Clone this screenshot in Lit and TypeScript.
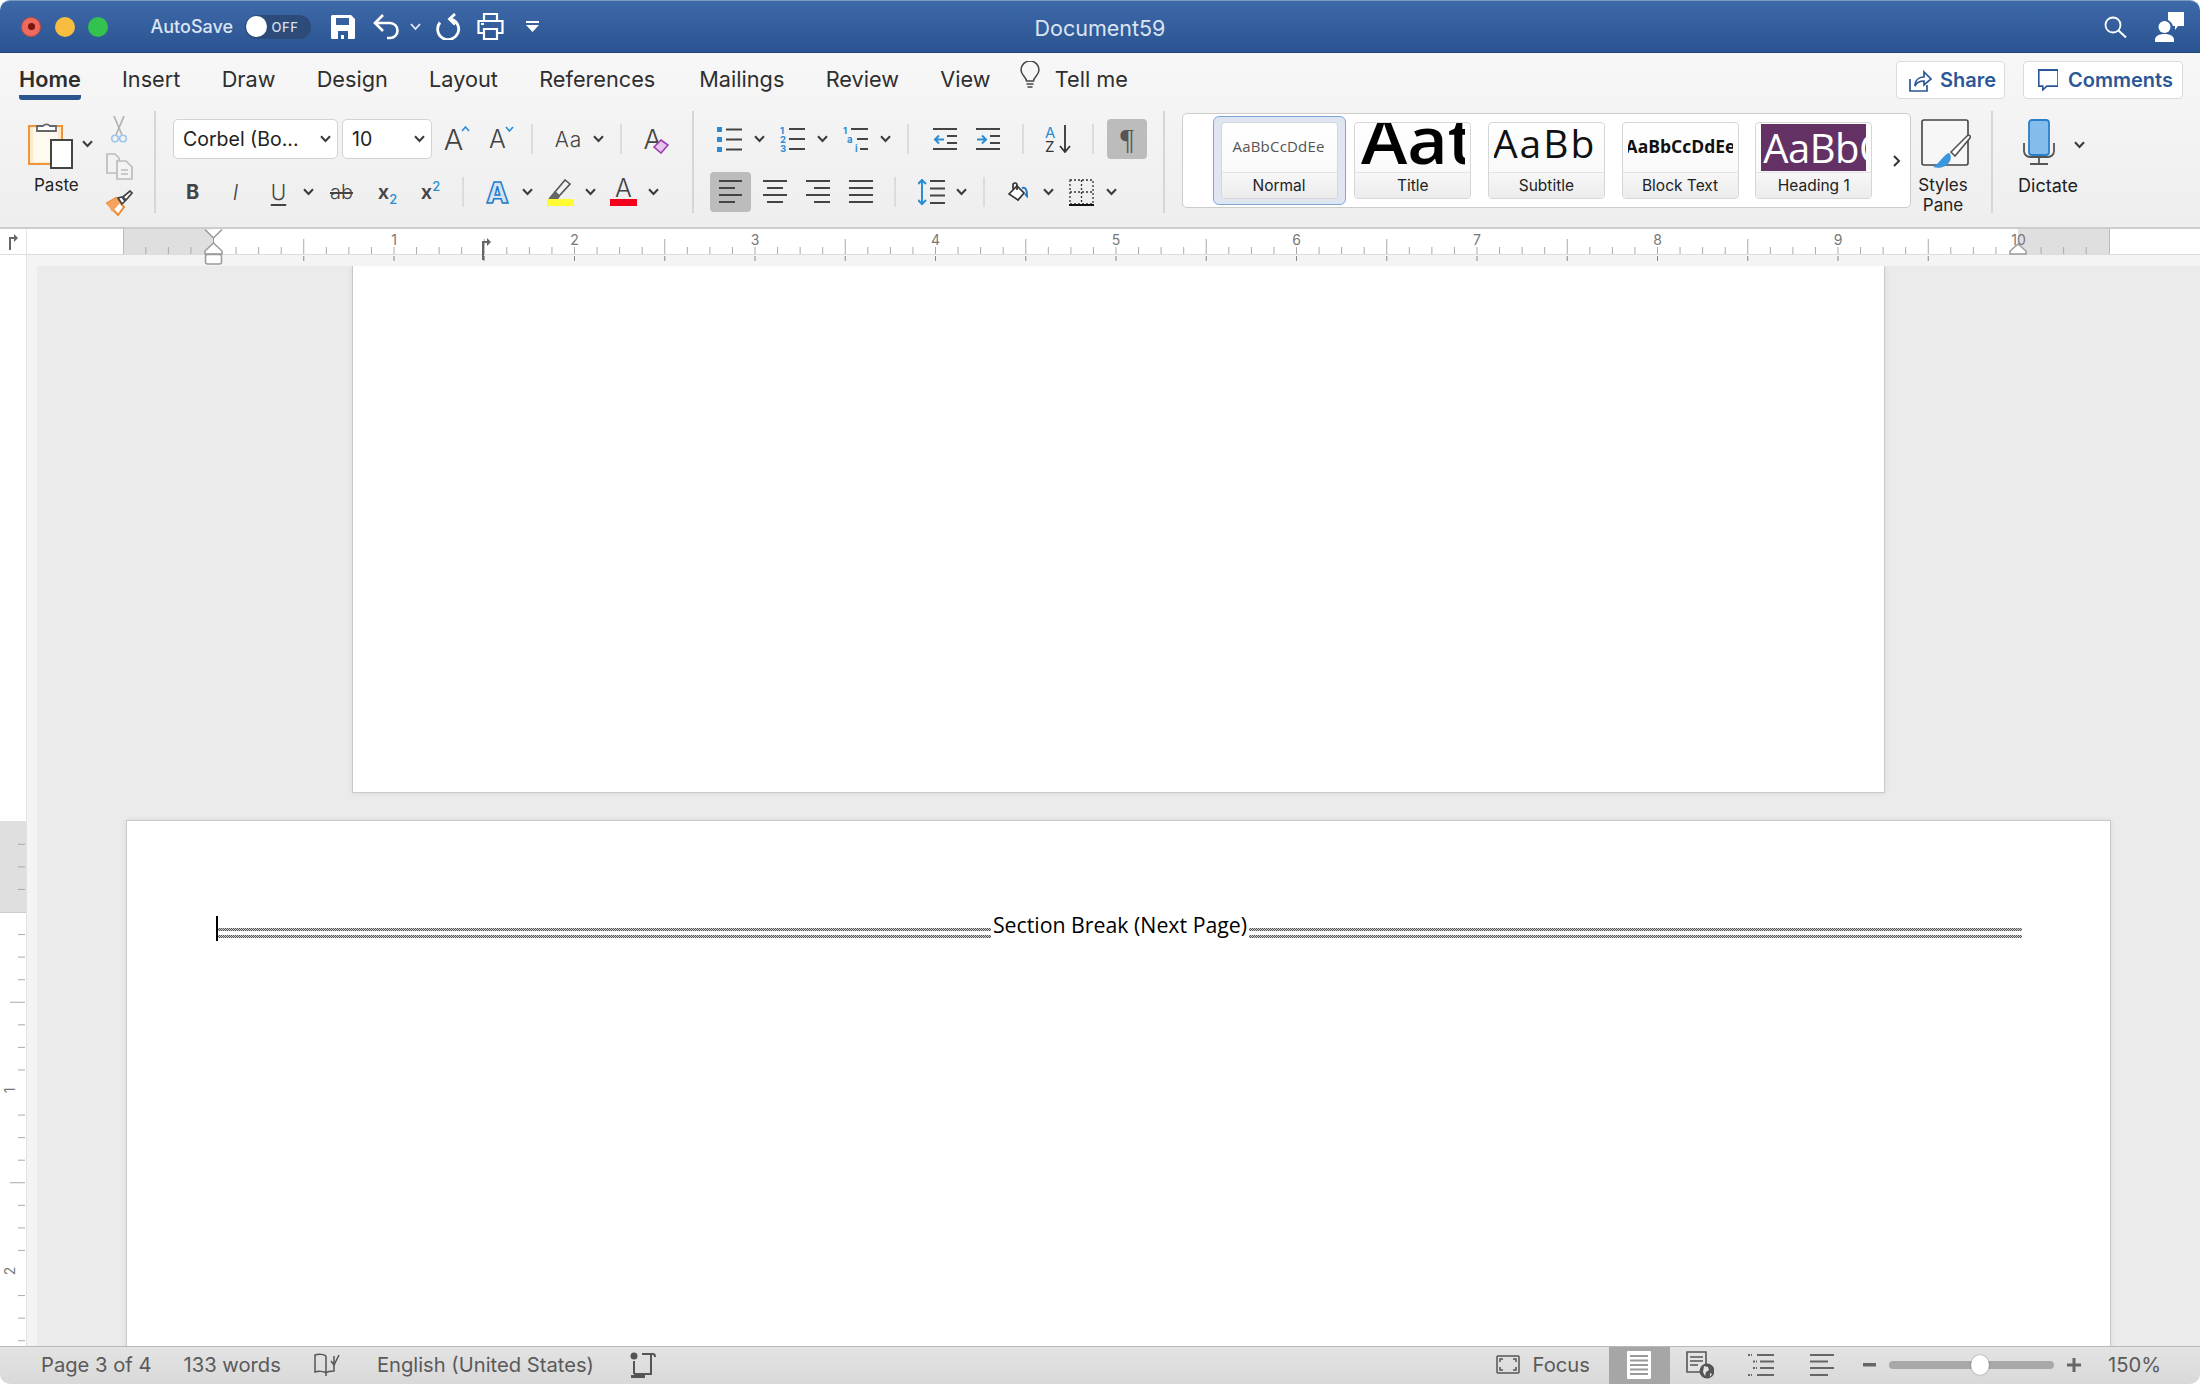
import { LitElement, html, svg, css } from "lit";
import { customElement } from "lit/decorators.js";

const chev = html`<span class="chev"><svg width="11" height="8" viewBox="0 0 11 8"><path d="M1 1.2l4.5 4.8L10 1.2" fill="none" stroke="#3a3a3a" stroke-width="2"/></svg></span>`;

function lines(rows: number[][]) {
  return rows.map((r) => svg`<path d="M${r[0]} ${r[1]}H${r[2]}" stroke="#444" stroke-width="2"/>`);
}

const alignIcon = (rows: number[][]) => html`<svg width="24" height="24" viewBox="0 0 24 24">${lines(rows)}</svg>`;

// ruler marks, zero is the left page margin, 8 ticks to the inch
const INCH = 180.5;
const ZERO = 213.5;

function hRuler() {
  const marks = [];
  for (let i = -3; i <= 83; i++) {
    const x = ZERO + (i * INCH) / 8;
    if (i % 8 === 0) {
      if (i > 0 && i < 80) marks.push(svg`<path d="M${x} 18V25" stroke="#aaa"/><path d="M${x} 27V32" stroke="#888"/>`);
      if (i > 0) marks.push(svg`<text x=${x} y="16" text-anchor="middle" class="rn">${i / 8}</text>`);
    } else if (i % 4 === 0) {
      marks.push(svg`<path d="M${x} 10V25" stroke="#aaa"/><path d="M${x} 27V32" stroke="#888"/>`);
    } else {
      marks.push(svg`<path d="M${x} 18V25" stroke="#aaa"/>`);
    }
  }
  return svg`
    <rect x="0" y="0" width="2200" height="37" fill="#fff"/>
    <rect x="26" y="26" width="2174" height="11" fill="#f4f4f4"/>
    <rect x="123" y="0" width="90" height="25" fill="#dfdfdf"/>
    <rect x="2018" y="0" width="91" height="25" fill="#dfdfdf"/>
    <path d="M123.5 0V25M2109.5 0V25" stroke="#bbb"/>
    <path d="M0 25.5H2200" stroke="#ddd"/>
    <path d="M26.5 0V37" stroke="#e2e2e2"/>
    ${marks}
    <path d="M10 21V9h5" fill="none" stroke="#666" stroke-width="2"/><path d="M14 5l4 4-4 4z" fill="#666"/>
    <path d="M483 31V13h5" fill="none" stroke="#666" stroke-width="2"/><path d="M487 9l4 4-4 4z" fill="#666"/>
    <path d="M213.5 9V14" stroke="#999"/>
    <path d="M205 0.5L213.5 9 222 0.5" fill="#fff" stroke="#999" stroke-width="1.5"/>
    <path d="M213.5 14L222 22V25H205V22z" fill="#fff" stroke="#999" stroke-width="1.5"/>
    <rect x="205.5" y="25.5" width="16" height="9.5" rx="2" fill="#fff" stroke="#999" stroke-width="1.5"/>
    <path d="M2018 15L2026 22V25H2010V22z" fill="#fff" stroke="#999" stroke-width="1.5"/>
  `;
}

function vRuler() {
  // y is relative to the top of the main row (266 in the window), inch zero sits at 912
  const zero = 912 - 266;
  const marks = [];
  for (let i = -3; i < 30; i++) {
    const y = zero + (i * INCH) / 8;
    if (i % 8 === 0 && i > 0) {
      marks.push(svg`<text transform="translate(15 ${y - 2}) rotate(-90)" text-anchor="middle" class="rn">${i / 8}</text>`);
    } else if (i % 4 === 0 && i !== 0) {
      marks.push(svg`<path d="M10 ${y}H25" stroke="#aaa"/>`);
    } else if (i !== 0) {
      marks.push(svg`<path d="M18 ${y}H25" stroke="#aaa"/>`);
    }
  }
  return svg`
    <rect x="0" y="555" width="26" height="91" fill="#dfdfdf"/>
    <path d="M0 646.5H26" stroke="#ccc"/>
    ${marks}
  `;
}

@customElement("style-tile")
class StyleTile extends LitElement {
  static properties = { label: { type: String }, selected: { type: Boolean } };
  label = "";
  selected = false;
  static styles = css`
    :host { display: block; width: 117px; position: relative; flex: none; }
    .tile { height: 77px; box-sizing: border-box; border: 1px solid #d6d6d6; border-radius: 4px; background: linear-gradient(#fff, #f6f6f6); overflow: hidden; position: relative; display: flex; flex-direction: column; }
    .sel { position: absolute; inset: -6px -8px; border: 1.5px solid #7fa5d5; border-radius: 6px; background: #dfe6f1; }
    .pv { height: 51px; margin: 0 5px; overflow: hidden; display: flex; align-items: center; justify-content: flex-start; white-space: nowrap; }
    .lb { height: 25px; border-top: 1px solid #e4e4e4; background: linear-gradient(#f7f7f7, #ececec); font-size: 15.5px; line-height: 25px; text-align: center; color: #222; }
  `;
  render() {
    return html`${this.selected ? html`<div class="sel"></div>` : ""}
      <div class="tile"><div class="pv"><slot></slot></div><div class="lb">${this.label}</div></div>`;
  }
}

@customElement("app-root")
export class AppRoot extends LitElement {
  static styles = css`
    :host { display: flex; flex-direction: column; width: 2200px; height: 1384px; overflow: hidden; background: #fff; font-family: Inter, "Liberation Sans", sans-serif; color: #333; }
    svg { display: block; flex: none; }
    .rn { font: 14px Inter, sans-serif; fill: #777; }

    /* title bar */
    .title { height: 53px; box-sizing: border-box; flex: none; display: grid; grid-template-columns: 1fr auto 1fr; align-items: center; border-radius: 10px 10px 0 0; border-top: 1px solid #7f9ac2; border-bottom: 1px solid #234575; background: linear-gradient(#3e69a8, #2a5391); color: #fff; }
    .tl { display: flex; align-items: center; padding-left: 21px; }
    .light { width: 20px; height: 20px; border-radius: 50%; margin-right: 13.5px; display: flex; align-items: center; justify-content: center; box-sizing: border-box; }
    .red { background: #ec6a5e; border: 1px solid #c9473c; }
    .red i { width: 7px; height: 7px; border-radius: 50%; background: #7e120c; }
    .yel { background: #f6bd3f; }
    .grn { background: #33c24d; }
    .as { margin-left: 29px; font-size: 18px; font-weight: 500; color: #dbe4f1; width: 94px; }
    .tog { width: 66px; height: 24px; border-radius: 12px; background: #2c4b78; display: flex; align-items: center; gap: 5px; padding-left: 1px; box-sizing: border-box; font-size: 13px; font-weight: 500; letter-spacing: .5px; color: #d5deea; }
    .tog i { width: 21px; height: 21px; border-radius: 50%; background: #fff; }
    .ttxt { font-size: 21.5px; color: #dbe4f1; padding-top: 2px; }
    .tr { display: flex; justify-content: flex-end; align-items: center; gap: 28px; padding-right: 16px; }
    .qa { display: flex; align-items: center; margin-left: 20px; }

    /* tabs */
    .ribbon { flex: none; height: 176px; box-sizing: border-box; border-bottom: 2px solid #cdcdcd; background: linear-gradient(#f7f7f7, #eeeeee); display: flex; flex-direction: column; }
    .tabs { height: 58px; flex: none; display: flex; align-items: flex-start; padding-left: 19px; font-size: 21.7px; color: #2e2e2e; }
    .tab { padding-top: 13px; margin-right: 41.3px; height: 47px; box-sizing: border-box; }
    .tab.cur { font-weight: 600; border-bottom: 5px solid #2b5591; border-radius: 0 0 3px 3px; }
    .tab.wide { margin-right: 44px; }
    .bulb { margin: 8px 15px 0 -12px; }
    .acts { margin-left: auto; display: flex; gap: 18px; padding: 8px 17px 0 0; }
    .act { height: 38px; box-sizing: border-box; border: 1px solid #dadada; border-radius: 4px; background: #fff; color: #2b5797; font-size: 20px; font-weight: 600; display: flex; align-items: center; gap: 8px; }
    .share { padding-left: 12px; width: 109px; }
    .cmts { width: 160px; padding-left: 14px; }

    /* ribbon groups */
    .groups { display: flex; height: 102px; flex: none; }
    .grp { box-sizing: border-box; height: 102px; border-right: 2px solid #d6d6d6; padding-top: 8px; flex: none; }
    .clip { width: 156px; display: flex; padding-left: 28px; }
    .paste { width: 77px; display: flex; flex-direction: column; }
    .pasteTop { display: flex; align-items: center; gap: 5px; height: 50px; }
    .plabel { font-size: 17px; color: #222; margin: 6px 0 0 6px; }
    .clipcol { display: flex; flex-direction: column; align-items: center; width: 28px; margin-top: -3px; gap: 10px; }
    .font { width: 538px; padding-left: 15px; }
    .para { width: 471px; padding-left: 14px; }
    .row { height: 40px; display: flex; align-items: center; color: #444; }
    .row + .row { margin-top: 13px; }
    .b { width: 43px; height: 40px; display: flex; align-items: center; justify-content: center; flex: none; position: relative; }
    .chev { width: 17px; margin-right: 3px; display: flex; justify-content: center; flex: none; }
    .sep { width: 2px; height: 30px; background: #dcdcdc; margin: 0 10px; flex: none; }
    .on { background: #bcbcbc; border-radius: 4px; }
    .pil { width: 40px; margin-left: 1px; font: 30px "Liberation Serif", serif; color: #555; }
    .sel { height: 40px; box-sizing: border-box; border: 1px solid #d3d3d3; border-radius: 5px; background: #fff; display: flex; align-items: center; justify-content: space-between; font-size: 19.5px; color: #222; padding-left: 9px; margin-left: 2px; }
    .fam { width: 165px; }
    .siz { width: 90px; margin: 0 0 0 4px; }
    .a1 { font-size: 29px; font-weight: 300; }
    .a2 { font-size: 25px; font-weight: 300; margin-left: 1px; }
    .aa { font-size: 21px; font-weight: 300; letter-spacing: 1px; }
    .up { position: absolute; top: 7px; right: 5px; }
    .bold { font-weight: 700; font-size: 20px; }
    .it { font-style: italic; font-weight: 300; font-size: 21px; }
    .un { text-decoration: underline; text-underline-offset: 4px; font-weight: 300; font-size: 21px; }
    .st { text-decoration: line-through; font-weight: 300; font-size: 20px; }
    .xx { font-weight: 600; font-size: 20px; }
    .xx sub, .xx sup { color: #2a8dd4; font-size: 13px; font-weight: 500; line-height: 0; }
    .fx { font-size: 29px; font-weight: 800; color: #cfe4f7; -webkit-text-stroke: 1.5px #1f7ac9; }
    .col { display: flex; flex-direction: column; align-items: center; }
    .fc { font-size: 25px; font-weight: 300; line-height: 21px; }
    .bar { width: 27px; height: 7px; }

    /* styles */
    .stylesG { width: 828px; display: flex; padding: 2px 0 0 17px; }
    .gal { width: 729px; height: 95px; box-sizing: border-box; border: 1px solid #ccc; border-radius: 5px; background: #fff; display: flex; align-items: center; gap: 16.7px; padding-left: 37.5px; overflow: hidden; flex: none; }
    .more { margin-left: 4px; }
    .pane { width: 80px; margin-left: -8px; display: flex; flex-direction: column; align-items: center; text-align: center; padding-top: 6px; font-size: 17px; color: #222; line-height: 20px; }
    .pane svg { margin: 0 0 6px 6px; }
    .dict { display: flex; padding: 8px 0 0 32px; font-size: 18px; color: #222; }
    .dictCol { display: flex; flex-direction: column; align-items: center; width: 46px; }
    .dictCol svg { margin: 0 18px 10px 0; }
    .dict .chev { margin: 22px 0 0 0; height: 8px; }

    .pN { font: 15px "Open Sans", sans-serif; color: #555; letter-spacing: .2px; margin: 0 0 4px 6px; }
    .pT { display: block; font: 600 66px/62px "Open Sans", sans-serif; color: #000; margin: -16px 0 0 1px; align-self: flex-start; transform: scaleX(1.06); transform-origin: left; }
    .pS { font: 39px "Open Sans", sans-serif; color: #111; letter-spacing: 2px; margin: 0 0 10px -1px; }
    .pB { font: 700 17.5px "Open Sans", sans-serif; color: #111; margin: 0 0 3px -2px; }
    .pH { display: block; font: 40px/47px "Open Sans", sans-serif; color: #fff; background: #643164; width: 107px; height: 47px; letter-spacing: -.5px; overflow: hidden; padding-left: 2px; box-sizing: border-box; flex: none; }

    /* document */
    .ruler { flex: none; }
    .main { flex: 1; min-height: 0; display: flex; }
    .vr { width: 26px; flex: none; background: #fff; border-right: 1px solid #e2e2e2; }
    .strip { width: 10px; flex: none; background: #f4f4f4; }
    .doc { flex: 1; background: #ebebeb; overflow: hidden; }
    .page { background: #fff; border: 1px solid #c9c9c9; box-sizing: border-box; box-shadow: 0 0 6px rgba(0, 0, 0, .08); }
    .p1 { width: 1533px; height: 527px; margin-left: 315px; border-top: 0; }
    .p2 { width: 1985px; height: 700px; margin: 27px 0 0 89px; padding: 85px 88px 0 89px; }
    .sec { display: flex; align-items: center; height: 38px; }
    .caret { width: 2px; height: 25px; background: #000; flex: none; margin-top: 6px; }
    .brk { flex: 1; display: flex; flex-direction: column; gap: 4px; margin-top: 16px; }
    .brk::before, .brk::after { content: ""; height: 3px; background: repeating-conic-gradient(#555 0 25%, #ccc 0 50%) 0 0 / 2px 2px; }
    .stxt { font: 21.3px "Open Sans", sans-serif; color: #000; margin: -2px 2px 0; }

    /* status */
    .status { height: 38px; flex: none; box-sizing: border-box; border-top: 1px solid #b8b8b8; border-radius: 0 0 10px 10px; background: linear-gradient(#e3e3e3, #d9d9d9); display: flex; align-items: center; padding: 0 0 2px 41px; font-size: 20.2px; color: #5a5a5a; }
    .sright { margin: 0 0 -2px auto; display: flex; align-items: center; height: 37px; padding-bottom: 2px; box-sizing: border-box; }
    .view { height: 37px; margin-bottom: -2px; width: 61px; padding-bottom: 2px; box-sizing: border-box; display: flex; align-items: center; justify-content: center; flex: none; }
    .view.cur { background: #a6a6a6; }
    .slider { width: 165px; height: 8px; border-radius: 4px; background: #a8a8a8; position: relative; margin: 0 13px; }
    .slider i { position: absolute; left: 82px; top: -6px; width: 18px; height: 20px; border-radius: 50%; background: #fff; box-shadow: 0 0 2px rgba(0, 0, 0, .4); }
  `;

  render() {
    return html`
      <div class="title">
        <div class="tl">
          <span class="light red"><i></i></span><span class="light yel"></span><span class="light grn"></span>
          <span class="as">AutoSave</span>
          <span class="tog"><i></i>OFF</span>
          <div class="qa">
            <svg width="24" height="24" viewBox="0 0 24 24"><path fill-rule="evenodd" fill="#fff" d="M1.5 0H20l4 4v18.500a1.500 1.500 0 0 1-1.500 1.500h-21A1.500 1.500 0 0 1 0 22.500V1.500A1.500 1.500 0 0 1 1.500 0zM5 3v7h13V3zM7 24h10v-8H7zM10 24v-4h3v4z"/></svg>
            <svg style="margin-left:18px" width="27" height="26" viewBox="0 0 27 26"><path d="M10 1L2 9l8 8M2 9h15a7.500 7.500 0 0 1 0 15h-3" fill="none" stroke="#fff" stroke-width="2.600"/></svg>
            <svg style="margin-left:10px" width="11" height="8" viewBox="0 0 11 8"><path d="M1 1l4.500 5L10 1" fill="none" stroke="#e8eef6" stroke-width="1.800"/></svg>
            <svg style="margin-left:14px" width="26" height="27" viewBox="0 0 26 27"><path d="M5 9.500a10.500 10.500 0 1 0 11-3.500" fill="none" stroke="#fff" stroke-width="2.800"/><path d="M20 1l-5.500 5 5.500 5.500" fill="none" stroke="#fff" stroke-width="2.800"/></svg>
            <svg style="margin-left:16px" width="27" height="27" viewBox="0 0 27 27"><path d="M7 8V1h13v7M7 20H1.500V8h24v12H20M7 16h13v10H7z" fill="none" stroke="#fff" stroke-width="2.200"/><path d="M4 11h3" stroke="#fff" stroke-width="2"/></svg>
            <svg style="margin-left:22px" width="13" height="11" viewBox="0 0 13 11"><path d="M0 0h13v2H0z" fill="#fff"/><path d="M0 4h13l-6.500 7z" fill="#fff"/></svg>
          </div>
        </div>
        <div class="ttxt">Document59</div>
        <div class="tr">
          <svg width="23" height="22" viewBox="0 0 23 22"><circle cx="9" cy="9" r="7.500" fill="none" stroke="#fff" stroke-width="1.800"/><path d="M14.500 14.500L22 21.500" stroke="#fff" stroke-width="2"/></svg>
          <svg width="29" height="31" viewBox="0 0 29 31"><circle cx="9.500" cy="16" r="6" fill="#fff"/><path d="M0 31v-2c0-4 4-6 9.500-6s9.500 2 9.500 6v2z" fill="#fff"/><path d="M13 1h16v14h-6l-3 4v-4h-2c-1-3-3-5-5-6z" fill="#fff"/></svg>
        </div>
      </div>

      <div class="ribbon">
        <div class="tabs">
          <span class="tab cur">Home</span>
          <span class="tab">Insert</span><span class="tab">Draw</span><span class="tab">Design</span><span class="tab">Layout</span><span class="tab wide">References</span><span class="tab">Mailings</span><span class="tab">Review</span><span class="tab">View</span>
          <svg class="bulb" width="20" height="28" viewBox="0 0 20 28"><path d="M6.500 20c0-4-5.500-6-5.500-11a9 9 0 0 1 18 0c0 5-5.500 7-5.500 11z" fill="none" stroke="#444" stroke-width="1.500"/><path d="M6.500 23h7M7.500 26h5" stroke="#444" stroke-width="1.500"/></svg>
          <span class="tab">Tell me</span>
          <div class="acts">
            <div class="act share"><svg width="23" height="23" viewBox="0 0 23 23"><path d="M1 10v12h17v-6M6 17c0-6 4-9 9-9V3l7 7-7 6v-4c-4 0-7 1-9 5z" fill="none" stroke="#2b5797" stroke-width="1.700"/></svg>Share</div>
            <div class="act cmts"><svg width="20" height="22" viewBox="0 0 20 22" style="margin-right:2px"><path d="M1 1h24v17H11l-5 4v-4H1z" transform="scale(.8 .95)" fill="none" stroke="#2b5797" stroke-width="2"/></svg>Comments</div>
          </div>
        </div>

        <div class="groups">
          <div class="grp clip">
            <div class="paste">
              <div class="pasteTop">
                <svg width="46" height="50" viewBox="0 0 46 50">
                  <rect x="1" y="7" width="33" height="38" fill="#fdeccb" stroke="#f0943a" stroke-width="2"/>
                  <rect x="5" y="9" width="25" height="34" fill="#fffaf0"/>
                  <path d="M9 12V7h6a4.500 4.500 0 0 1 7 0h6v5z" fill="#fff" stroke="#666" stroke-width="1.800"/>
                  <rect x="23" y="21" width="21" height="28" fill="#fff" stroke="#444" stroke-width="2"/>
                </svg>
                ${chev}
              </div>
              <span class="plabel">Paste</span>
            </div>
            <div class="clipcol">
              <svg width="16" height="27" viewBox="0 0 16 27"><path d="M3 0l8 19M13 0L5 19" stroke="#b0b0b0" stroke-width="1.600"/><circle cx="4" cy="22.500" r="3.300" fill="none" stroke="#9cc6ea" stroke-width="1.600"/><circle cx="12" cy="22.500" r="3.300" fill="none" stroke="#9cc6ea" stroke-width="1.600"/></svg>
              <svg width="27" height="27" viewBox="0 0 27 27"><path d="M11 20H1V1h8l4 4v3" fill="none" stroke="#bcbcbc" stroke-width="1.700"/><path d="M11 8h9l6 6v12H11z" fill="#f3f3f3" stroke="#bcbcbc" stroke-width="1.700"/><path d="M15 17h7M15 21h7" stroke="#bcbcbc" stroke-width="1.500"/></svg>
              <svg width="27" height="26" viewBox="0 0 27 26"><path d="M1 13l9-5 8 9-6 8z" fill="#fff" stroke="#ee8a34" stroke-width="2"/><path d="M1 13l9-5 4 5-8 9z" fill="#f5a35c"/><path d="M12 8l4 6 3-3-3-4zM17 7l7-6 2 2-6 7z" fill="#fff" stroke="#444" stroke-width="1.700"/></svg>
            </div>
          </div>

          <div class="grp font">
            <div class="row">
              <span class="sel fam">Corbel (Bo...${chev}</span>
              <span class="sel siz">10${chev}</span>
              <span class="b a1">A<svg class="up" width="9" height="6" viewBox="0 0 9 6"><path d="M1 5l3.500-4L8 5" fill="none" stroke="#2a8dd4" stroke-width="1.600"/></svg></span>
              <span class="b a2">A<svg class="up" width="9" height="6" viewBox="0 0 9 6"><path d="M1 1l3.500 4L8 1" fill="none" stroke="#2a8dd4" stroke-width="1.600"/></svg></span>
              <span class="sep" style="margin:0 14px 0 12px"></span>
              <span class="b aa">Aa</span>${chev}
              <span class="sep" style="margin:0 9px 0 10px"></span>
              <span class="b" style="font-size:27px;font-weight:300">A<svg style="position:absolute;left:22px;top:20px" width="16" height="15" viewBox="0 0 16 15"><path d="M1 8l7-7 7 5-7 8z" fill="#e3c6ea" stroke="#a03bb0" stroke-width="1.600"/></svg></span>
            </div>
            <div class="row">
              <span class="b bold">B</span><span class="b it">I</span><span class="b un">U</span>${chev}
              <span class="b st">ab</span>
              <span class="b xx" style="margin-left:3px"><span>x<sub>2</sub></span></span><span class="b xx"><span>x<sup>2</sup></span></span>
              <span class="sep" style="margin:0 12px 0 10px"></span>
              <span class="b fx">A</span>${chev}
              <span class="b col"><svg width="27" height="20" viewBox="0 0 27 20"><path d="M8 13L18 1l5 4-11 12zM8 13l-5 6h8l1-2z" fill="#f3f3f3" stroke="#555" stroke-width="1.600"/><path d="M2 20l6-8 5 5-2 3z" fill="#666"/></svg><span class="bar" style="background:#fffb33"></span></span>${chev}
              <span class="b col"><span class="fc">A</span><span class="bar" style="background:#f4001c"></span></span>${chev}
            </div>
          </div>

          <div class="grp para">
            <div class="row">
              <span class="b"><svg width="25" height="25" viewBox="0 0 25 25"><path d="M0 0h5v5H0zM0 10h5v5H0zM0 20h5v5H0z" fill="#2a8dd4"/>${lines([[9, 2.5, 25], [9, 12.5, 25], [9, 22.5, 25]])}</svg></span>${chev}
              <span class="b"><svg width="25" height="26" viewBox="0 0 25 26"><g font-size="9.500" font-weight="700" fill="#2a8dd4" font-family="Inter"><text x="0" y="8">1</text><text x="0" y="17">2</text><text x="0" y="26">3</text></g>${lines([[9, 3, 25], [9, 13, 25], [9, 23, 25]])}</svg></span>${chev}
              <span class="b"><svg width="25" height="26" viewBox="0 0 25 26"><g font-size="9.500" font-weight="700" fill="#2a8dd4" font-family="Inter"><text x="0" y="8">1</text><text x="4" y="17">a</text><text x="12" y="26">i</text></g>${lines([[8, 3, 25], [14, 13, 25], [17, 23, 25]])}</svg></span>${chev}
              <span class="sep" style="margin:0 14px 0 10px"></span>
              <span class="b"><svg width="24" height="24" viewBox="0 0 24 24">${lines([[0, 2, 24], [14, 9, 24], [14, 16, 24], [0, 22, 24]])}<path d="M11 12.500H2M6 8.500l-4 4 4 4" fill="none" stroke="#2a8dd4" stroke-width="2"/></svg></span>
              <span class="b"><svg width="24" height="24" viewBox="0 0 24 24">${lines([[0, 2, 24], [14, 9, 24], [14, 16, 24], [0, 22, 24]])}<path d="M1 12.500h9M6 8.500l4 4-4 4" fill="none" stroke="#2a8dd4" stroke-width="2"/></svg></span>
              <span class="sep" style="margin:0 13px 0 13px"></span>
              <span class="b"><svg width="28" height="28" viewBox="0 0 28 28"><text x="0" y="12.500" font-size="15" font-family="Inter" fill="#2a8dd4">A</text><text x="0" y="27" font-size="15" font-family="Inter" fill="#333">Z</text><path d="M20 0v26M15 21l5 6 5-6" fill="none" stroke="#333" stroke-width="1.800"/></svg></span>
              <span class="sep" style="margin:0 12px 0 12px"></span>
              <span class="b on pil">¶</span>
            </div>
            <div class="row" style="padding-left:2px">
              <span class="b on" style="width:41px;margin:0 2px 0 0">${alignIcon([[0, 1, 23], [0, 8, 16], [0, 15, 23], [0, 22, 16]])}</span>
              <span class="b">${alignIcon([[0, 1, 24], [4, 8, 20], [0, 15, 24], [4, 22, 20]])}</span>
              <span class="b">${alignIcon([[0, 1, 24], [8, 8, 24], [0, 15, 24], [8, 22, 24]])}</span>
              <span class="b">${alignIcon([[0, 1, 24], [0, 8, 24], [0, 15, 24], [0, 22, 24]])}</span>
              <span class="sep" style="margin:0 14px 0 12px"></span>
              <span class="b"><svg width="27" height="26" viewBox="0 0 27 26"><path d="M4 0v26M0 5l4-4 4 4M0 21l4 4 4-4" fill="none" stroke="#2a8dd4" stroke-width="2"/>${lines([[12, 2, 27], [12, 9.500, 27], [12, 16.500, 27], [12, 24, 27]])}</svg></span>${chev}
              <span class="sep" style="margin:0 12px 0 10px"></span>
              <span class="b"><svg width="21" height="21" viewBox="0 0 21 21"><path d="M1 12l8-8 7 7-6 7z" fill="#fff" stroke="#333" stroke-width="1.700"/><path d="M5 7V3a2 2 0 0 1 4 0v5" fill="none" stroke="#333" stroke-width="1.700"/><path d="M14 6c4-1 5 2 5 8l-2-2" fill="none" stroke="#1f7ac9" stroke-width="2"/></svg></span>${chev}
              <span class="b"><svg width="25" height="27" viewBox="0 0 25 27"><path d="M1 1h23v24H1zM12.500 1v24M1 13h23" fill="none" stroke="#333" stroke-width="1.300" stroke-dasharray="2 2"/><path d="M0 26h25" stroke="#111" stroke-width="2"/></svg></span>${chev}
            </div>
          </div>

          <div class="grp stylesG">
            <div class="gal">
              <style-tile label="Normal" selected><span class="pN">AaBbCcDdEe</span></style-tile>
              <style-tile label="Title"><span class="pT">Aat</span></style-tile>
              <style-tile label="Subtitle"><span class="pS">AaBb</span></style-tile>
              <style-tile label="Block Text"><span class="pB">AaBbCcDdEe</span></style-tile>
              <style-tile label="Heading 1"><span class="pH">AaBbC</span></style-tile>
              <svg class="more" width="8" height="12" viewBox="0 0 8 12"><path d="M1 1l5 5-5 5" fill="none" stroke="#333" stroke-width="2"/></svg>
            </div>
            <div class="pane">
              <svg width="50" height="50" viewBox="0 0 50 50"><rect x="1" y="1" width="46" height="45" rx="2" fill="#f7f7f7" stroke="#444" stroke-width="1.600"/><path d="M30 33L46 17c2-2 4 0 3 2L34 37z" fill="#fff" stroke="#555" stroke-width="1.600"/><path d="M12 48c7 2 14 0 17-6 2-4 0-8-1-8-4 0-9 10-16 14z" fill="#3b97dd"/></svg>
              <span>Styles<br/>Pane</span>
            </div>
          </div>

          <div class="dict">
            <div class="dictCol">
              <svg width="32" height="46" viewBox="0 0 32 46"><rect x="6" y="1" width="20" height="35" rx="3" fill="#84bdec" stroke="#2a7fc9" stroke-width="1.800"/><path d="M1 24v8a6 6 0 0 0 6 6h18a6 6 0 0 0 6-6v-8M16 38v7M7 45h18" fill="none" stroke="#555" stroke-width="1.800"/></svg>
              <span>Dictate</span>
            </div>
            ${chev}
          </div>
        </div>
      </div>

      <svg class="ruler" width="2200" height="37" viewBox="0 0 2200 37">${hRuler()}</svg>

      <div class="main">
        <svg class="vr" width="26" height="1080" viewBox="0 0 26 1080">${vRuler()}</svg>
        <div class="strip"></div>
        <div class="doc">
          <div class="page p1"></div>
          <div class="page p2">
            <div class="sec">
              <span class="caret"></span><span class="brk"></span>
              <span class="stxt">Section Break (Next Page)</span>
              <span class="brk"></span>
            </div>
          </div>
        </div>
      </div>

      <div class="status">
        <span>Page 3 of 4</span>
        <span style="margin-left:32px">133 words</span>
        <svg style="margin-left:33px" width="26" height="24" viewBox="0 0 26 24"><path d="M12 3C10 1 4 1 1 2v17c3-1 9-1 11 1 2-2 5-2 8-2V3M12 3v20" fill="none" stroke="#555" stroke-width="1.500"/><path d="M17 8l3 4 5-10" fill="none" stroke="#555" stroke-width="1.500"/></svg>
        <span style="margin-left:37px">English (United States)</span>
        <svg style="margin-left:36px" width="26" height="26" viewBox="0 0 26 26"><circle cx="4" cy="4" r="3.500" fill="#555"/><path d="M4 9v13M12 2h11c2 0 2 2 2 3M21 2v20H4" fill="none" stroke="#555" stroke-width="2"/><path d="M1 23h14v3H1z" fill="#555"/></svg>
        <div class="sright">
          <svg width="24" height="19" viewBox="0 0 24 19"><rect x="1" y="1" width="22" height="17" rx="1" fill="none" stroke="#555" stroke-width="1.500"/><path d="M4 7V4h3M20 7V4h-3M4 12v3h3M20 12v3h-3" fill="none" stroke="#555" stroke-width="1.500"/></svg>
          <span style="margin:0 19px 0 13px">Focus</span>
          <span class="view cur"><svg width="24" height="28" viewBox="0 0 24 28"><rect width="24" height="28" rx="1" fill="#fff"/><path d="M3 5h18M3 9.500h18M3 14h18M3 18.500h18M3 23h18" stroke="#999" stroke-width="1.800"/></svg></span>
          <span class="view"><svg width="28" height="28" viewBox="0 0 28 28"><path d="M1 1h19v20H1z" fill="#e3e3e3" stroke="#555" stroke-width="1.600"/><path d="M4 6h13M4 10h13M4 14h8" stroke="#555" stroke-width="1.600"/><circle cx="21" cy="20" r="7.500" fill="#555"/><path d="M18 15l4 1 1 3-3 2-1 4-2-4zM24 22l2 1-2 3z" fill="#e3e3e3"/></svg></span>
          <span class="view"><svg width="26" height="24" viewBox="0 0 26 24"><path d="M9 2h17M12 8.500h14M12 15h14M9 22h17" stroke="#666" stroke-width="2"/><path d="M0 2h4M5 8.500h4M5 15h4M0 22h4" stroke="#666" stroke-width="2" stroke-dasharray="2 1"/></svg></span>
          <span class="view"><svg width="24" height="24" viewBox="0 0 24 24"><path d="M0 2h24M0 8.500h18M0 15h24M0 22h18" stroke="#666" stroke-width="2.200"/></svg></span>
          <svg style="margin-left:10px" width="13" height="4" viewBox="0 0 13 4"><rect width="13" height="3.500" fill="#666"/></svg>
          <span class="slider"><i></i></span>
          <svg width="14" height="14" viewBox="0 0 14 14"><path d="M7 0v14M0 7h14" stroke="#666" stroke-width="3"/></svg>
          <span style="margin:0 39px 0 27px">150%</span>
        </div>
      </div>
    `;
  }
}
